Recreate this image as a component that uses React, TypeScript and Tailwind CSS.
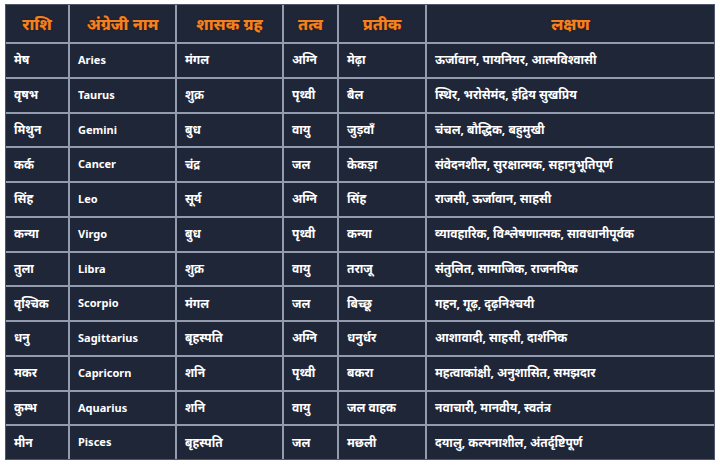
import React from 'react';

const rows: string[][] = [
  ['मेष', 'Aries', 'मंगल', 'अग्नि', 'मेढ़ा', 'ऊर्जावान, पायनियर, आत्मविश्वासी'],
  ['वृषभ', 'Taurus', 'शुक्र', 'पृथ्वी', 'बैल', 'स्थिर, भरोसेमंद, इंद्रिय सुखप्रिय'],
  ['मिथुन', 'Gemini', 'बुध', 'वायु', 'जुड़वाँ', 'चंचल, बौद्धिक, बहुमुखी'],
  ['कर्क', 'Cancer', 'चंद्र', 'जल', 'केकड़ा', 'संवेदनशील, सुरक्षात्मक, सहानुभूतिपूर्ण'],
  ['सिंह', 'Leo', 'सूर्य', 'अग्नि', 'सिंह', 'राजसी, ऊर्जावान, साहसी'],
  ['कन्या', 'Virgo', 'बुध', 'पृथ्वी', 'कन्या', 'व्यावहारिक, विश्लेषणात्मक, सावधानीपूर्वक'],
  ['तुला', 'Libra', 'शुक्र', 'वायु', 'तराजू', 'संतुलित, सामाजिक, राजनयिक'],
  ['वृश्चिक', 'Scorpio', 'मंगल', 'जल', 'बिच्छू', 'गहन, गूढ़, दृढ़निश्चयी'],
  ['धनु', 'Sagittarius', 'बृहस्पति', 'अग्नि', 'धनुर्धर', 'आशावादी, साहसी, दार्शनिक'],
  ['मकर', 'Capricorn', 'शनि', 'पृथ्वी', 'बकरा', 'महत्वाकांक्षी, अनुशासित, समझदार'],
  ['कुम्भ', 'Aquarius', 'शनि', 'वायु', 'जल वाहक', 'नवाचारी, मानवीय, स्वतंत्र'],
  ['मीन', 'Pisces', 'बृहस्पति', 'जल', 'मछली', 'दयालु, कल्पनाशील, अंतर्दृष्टिपूर्ण'],
];

const headers = ['राशि', 'अंग्रेजी नाम', 'शासक ग्रह', 'तत्व', 'प्रतीक', 'लक्षण'];

export default function App() {
  return (
    <div className="w-[720px] h-[468px] bg-white pt-[4px] pl-[5px]">
      <div
        className="w-[710px] h-[456px] grid grid-cols-[62px_105px_105px_53px_86px_1fr] grid-rows-[37px_repeat(12,1fr)] gap-[2px] bg-[#939cae] border border-[#4f576b]"
        style={{ fontFamily: '"Noto Sans", "Noto Sans Devanagari", "Lohit Devanagari", sans-serif' }}
      >
        {headers.map((h) => (
          <div
            key={h}
            className="bg-[#1f2638] flex items-center justify-center text-[16px] font-extrabold text-[#f4801f] [text-shadow:0_0_2px_#3a1a05]"
          >
            {h}
          </div>
        ))}
        {rows.map((r) =>
          r.map((c, i) => (
            <div
              key={r[0] + i}
              className={
                'bg-[#1f2638] flex items-center pl-[8px] font-bold text-white whitespace-nowrap ' +
                (i === 1 ? 'text-[11px]' : 'text-[12px]')
              }
            >
              {c}
            </div>
          ))
        )}
      </div>
    </div>
  );
}
